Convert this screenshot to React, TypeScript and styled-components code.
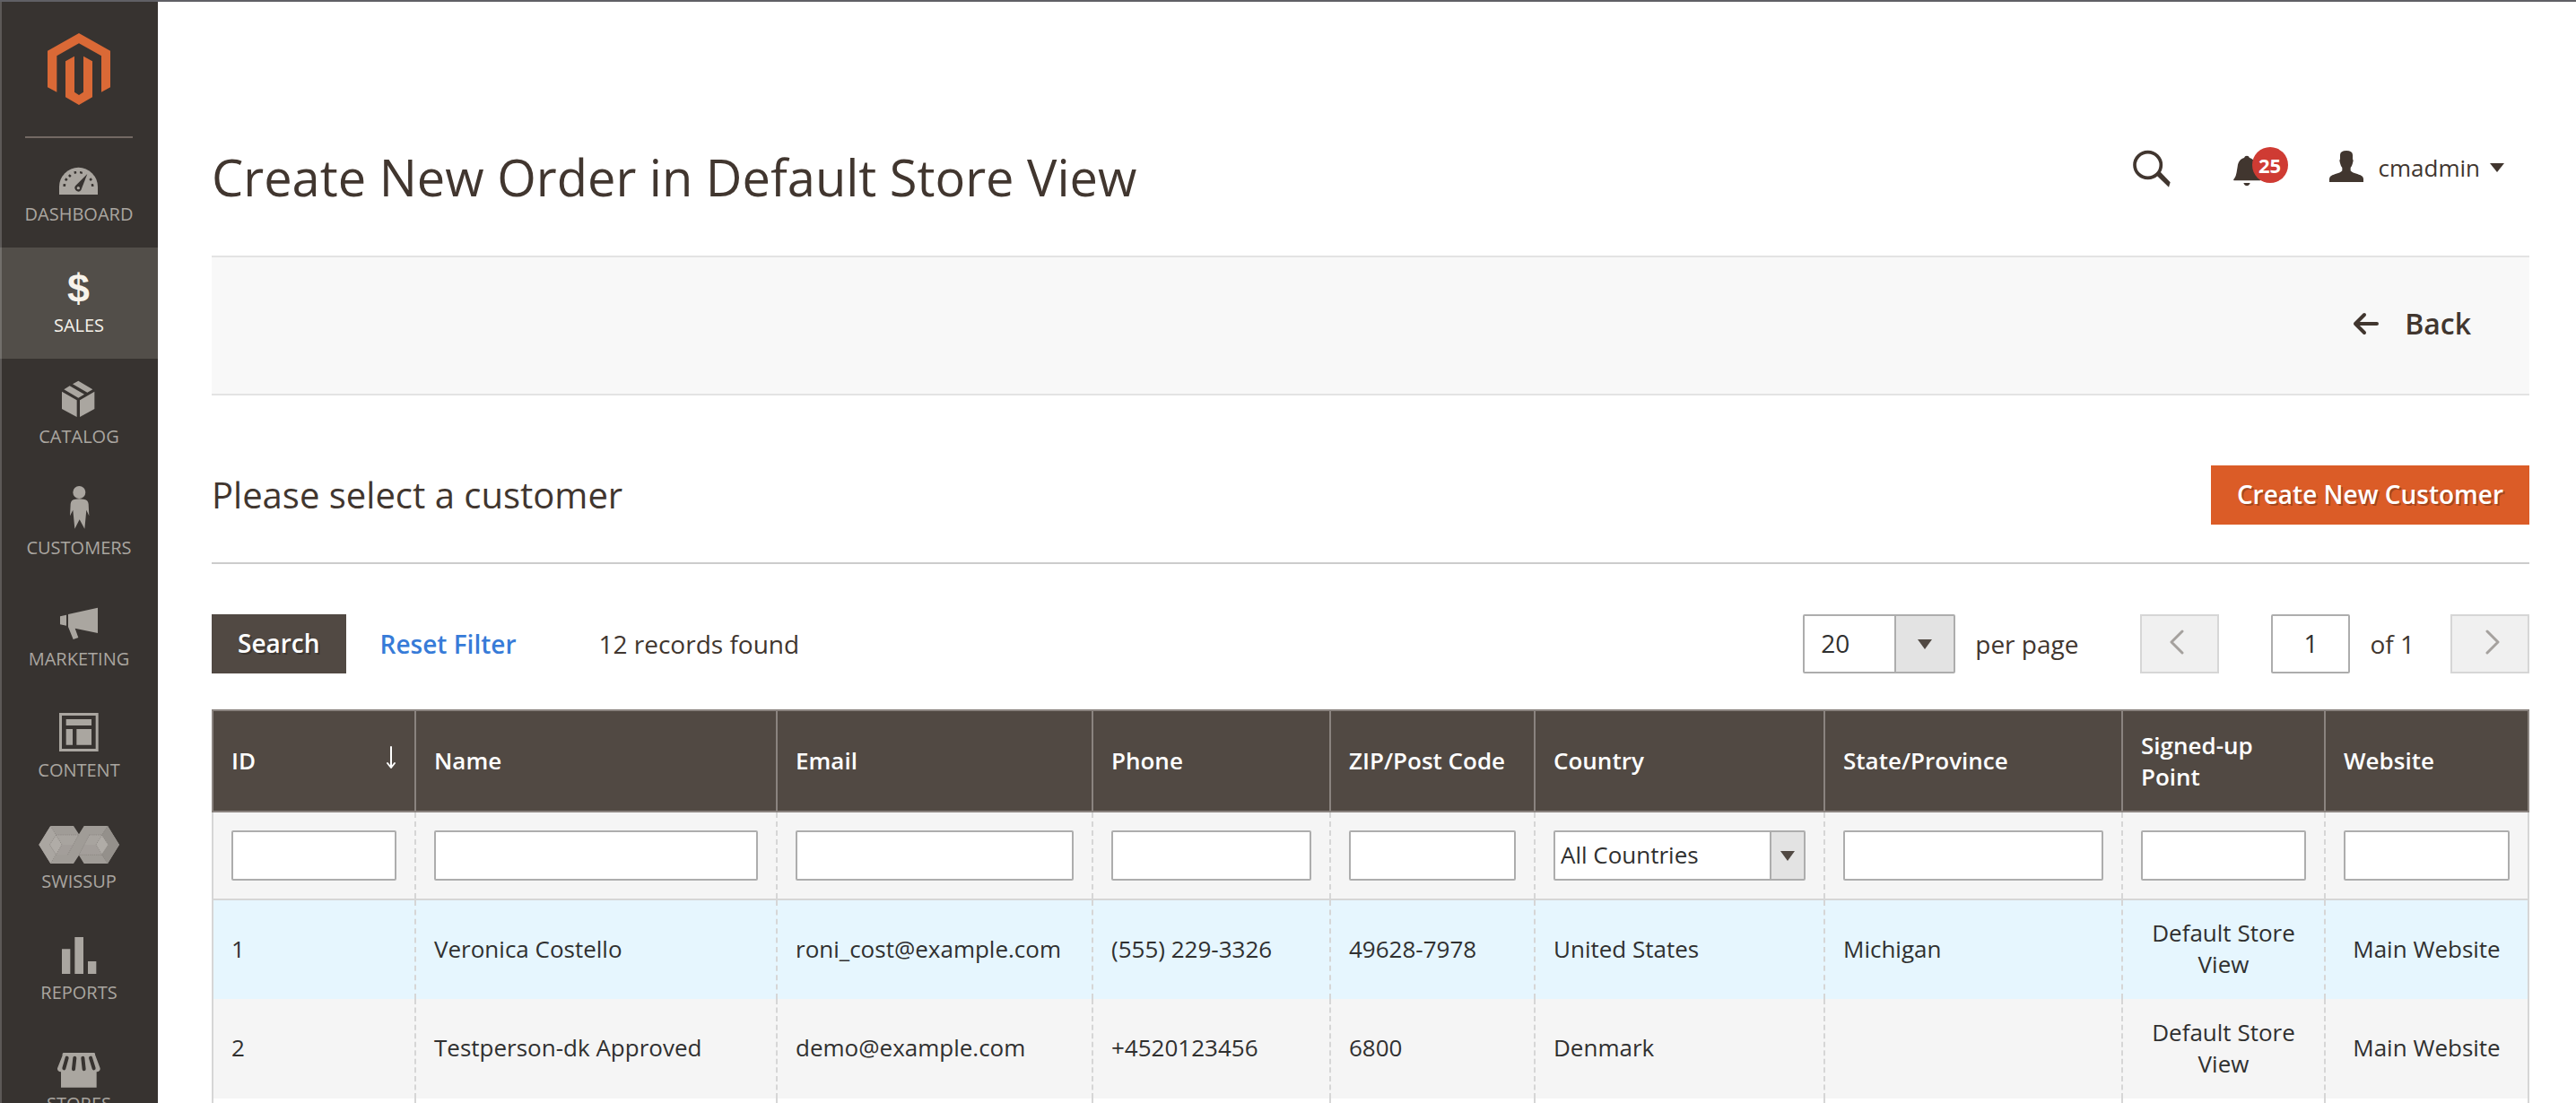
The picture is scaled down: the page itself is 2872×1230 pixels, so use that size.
import React from "react";
import styled, { createGlobalStyle, css } from "styled-components";

const GlobalStyle = createGlobalStyle`
  *, *::before, *::after { box-sizing: border-box; }
  html, body { margin: 0; padding: 0; background: #fff; }
  body {
    overflow: hidden;
    color: #41362f;
    font-family: "Open Sans", "Noto Sans", sans-serif;
    font-size: 28px;
    line-height: 38px;
  }
  button, input, select { font: inherit; color: inherit; margin: 0; }
  svg { display: block; flex: none; }
`;

const Page = styled.div`
  display: flex;
  height: 100vh;
  overflow: hidden;
  border-top: 2px solid #606065;
`;

/* ---------- Sidebar ---------- */

const edge = css`
  box-shadow: inset 2px 0 rgba(255, 255, 255, 0.19);
`;

const Sidebar = styled.nav`
  flex: none;
  width: 176px;
  background: #373330;
  ${edge}
`;

const LogoLink = styled.a`
  display: flex;
  height: 152px;
  margin: 0 28px -2px;
  padding-top: 35px;
  justify-content: center;
  border-bottom: 2px solid #736963;
`;

const Menu = styled.ul`
  list-style: none;
  margin: 0;
  padding: 0;
`;

const MenuLink = styled.a<{ $active?: boolean }>`
  display: flex;
  flex-direction: column;
  align-items: center;
  height: 124px;
  color: ${(p) => (p.$active ? "#f7f3eb" : "#aaa6a0")};
  font-size: 20px;
  line-height: 28px;
  text-transform: uppercase;
  text-decoration: none;
  ${(p) =>
    p.$active &&
    css`
      background: #524e49;
      ${edge}
    `}
`;

/* ---------- Header ---------- */

const Main = styled.main`
  flex: 1;
  min-width: 0;
  padding: 157px 52px 0 60px;
`;

const Header = styled.header`
  display: flex;
  justify-content: space-between;
  align-items: flex-start;
  margin-bottom: 50px;
`;

const Title = styled.h1`
  margin: 0;
  font-size: 56px;
  line-height: 76px;
  font-weight: 400;
`;

const Actions = styled.div`
  display: flex;
  height: 56px;
  padding-right: 28px;
`;

const PlainButton = styled.button`
  display: flex;
  align-items: center;
  padding: 0;
  border: 0;
  background: none;
  cursor: pointer;
`;

const SearchToggle = styled(PlainButton)`
  padding-right: 35px;
`;

const Bell = styled(PlainButton)`
  position: relative;
  width: 119px;
  padding-left: 35px;
`;

const Badge = styled.span`
  position: absolute;
  top: 5px;
  left: 56px;
  width: 40px;
  height: 40px;
  border-radius: 50%;
  background: #cf3b33;
  color: #fff;
  font-size: 22px;
  line-height: 40px;
  font-weight: 700;
  text-align: center;
`;

const Account = styled(PlainButton)`
  padding-left: 23px;
  font-size: 26px;
  line-height: 35px;
`;

const AccountName = styled.span`
  padding: 0 11px 0 17px;
`;

const Toolbar = styled.div`
  display: flex;
  justify-content: flex-end;
  align-items: center;
  height: 156px;
  padding: 0 65px 4px 0;
  background: #f8f8f8;
  border: solid #e3e3e3;
  border-width: 2px 0;
`;

const BackButton = styled(PlainButton)`
  gap: 28px;
  font-size: 32px;
  line-height: 44px;
  font-weight: 600;
`;

/* ---------- Section and grid controls ---------- */

const Section = styled.div`
  display: flex;
  justify-content: space-between;
  align-items: center;
  margin: 78px 0 56px;
  padding-bottom: 42px;
  border-bottom: 2px solid #ccc;
`;

const SectionTitle = styled.h2`
  margin: 0;
  font-size: 40px;
  line-height: 54px;
  font-weight: 400;
`;

const Button = styled.button<{ $primary?: boolean }>`
  height: 66px;
  padding: 0 29px 2px;
  border: 0;
  background: ${(p) => (p.$primary ? "#db5c27" : "#514943")};
  color: #fff;
  font-weight: 600;
  text-shadow: 2px 2px 0 rgba(0, 0, 0, 0.25);
  cursor: pointer;
`;

const Controls = styled.div`
  display: flex;
  justify-content: space-between;
  margin-bottom: 40px;
`;

const Group = styled.div`
  display: flex;
  align-items: center;
`;

const ResetButton = styled(PlainButton)`
  margin: 0 92px 0 38px;
  color: #377bd8;
  font-weight: 600;
`;

const field = css`
  width: 100%;
  border: 2px solid #adadad;
  border-radius: 2px;
  background: #fff;
  color: #303030;
  outline: 0;
`;

const SelectBox = styled.span<{ $large?: boolean }>`
  display: grid;
  align-items: center;
  width: ${(p) => (p.$large ? "170px" : "100%")};
  height: ${(p) => (p.$large ? "66px" : "56px")};

  > * {
    grid-area: 1 / 1;
  }

  select {
    ${field}
    height: 100%;
    padding: 0 0 2px ${(p) => (p.$large ? "18px" : "6px")};
    appearance: none;
  }
`;

const SelectArrow = styled.span<{ $large?: boolean }>`
  display: flex;
  align-items: center;
  justify-content: center;
  justify-self: end;
  width: ${(p) => (p.$large ? "66px" : "38px")};
  height: calc(100% - 4px);
  margin-right: 2px;
  border-left: 2px solid #adadad;
  background: #e3e3e3;
  pointer-events: none;
`;

const PerPage = styled.label`
  margin: 0 69px 0 22px;
`;

const PageButton = styled.button`
  display: flex;
  align-items: center;
  justify-content: center;
  width: 88px;
  height: 66px;
  padding: 0 0 4px;
  border: 2px solid #d6d6d6;
  background: #f0f0f0;
`;

const PageInput = styled.input`
  ${field}
  width: 88px;
  height: 66px;
  margin: 0 22px 0 58px;
  padding: 0 0 2px;
  text-align: center;
`;

const PageTotal = styled.label`
  margin-right: 40px;
`;

/* ---------- Table ---------- */

const Table = styled.table`
  width: 100%;
  table-layout: fixed;
  border-collapse: collapse;
  font-size: 26px;
  line-height: 35px;

  th {
    height: 113px;
    padding: 19px 20px;
    border: 2px solid #8a837f;
    background: #514943;
    color: #fff;
    font-weight: 600;
    text-align: left;
  }

  td {
    height: 111px;
    padding: 0 20px 2px;
    border: dashed #d6d6d6;
    border-width: 0 2px;
    color: #303030;
  }

  td:first-child {
    border-left-style: solid;
  }

  td:last-child {
    border-right-style: solid;
  }
`;

const Column = styled.col<{ $width: number }>`
  width: ${(p) => p.$width}px;
`;

const FilterRow = styled.tr`
  background: #f5f5f5;

  && td {
    height: 98px;
    padding: 20px;
    border-bottom: 2px solid #d6d6d6;
  }
`;

const FilterInput = styled.input`
  ${field}
  display: block;
  height: 56px;
  padding: 0 8px;
`;

const BodyRow = styled.tr<{ $tone: string }>`
  background: ${(p) => p.$tone};

  td:nth-child(n + 8) {
    text-align: center;
  }
`;

const SortButton = styled(PlainButton)`
  width: 100%;
  justify-content: space-between;
  font-weight: 600;
  text-align: left;
`;

/* ---------- Drawings ---------- */

function MenuIcon({ top, children }: { top: number; children: React.ReactNode }) {
  return (
    <svg width="90" height="73" viewBox={`129 ${top} 270 219`} fill="currentColor" aria-hidden="true">
      {children}
    </svg>
  );
}

const Triangle = () => (
  <svg width="16" height="11" viewBox="0 0 16 11" aria-hidden="true">
    <path d="M0 0h16L8 11z" fill="#514943" />
  </svg>
);

const Chevron = ({ d }: { d: string }) => (
  <svg width="22" height="28" viewBox="0 0 22 28" fill="none" stroke="#a5a19e" strokeWidth="3" strokeLinecap="round" strokeLinejoin="round" aria-hidden="true">
    <path d={d} />
  </svg>
);

const DashboardIcon = (
  <MenuIcon top={456}>
    <path d="M198 651v-26a64.500 64.500 0 0 1 129 0v26z" />
    <g fill="#373330">
      <path d="M212 615l8 1-1 8-8-1zM220 595l7 5-5 6-6-4zM233 583l6 5-5 6-6-6zM247 574l8-1 1 7-7 2zM267 573l9 2-1 7-8-2zM304 595l5 6-6 5-5-6zM305 616l7-1 2 8-8 1z" />
      <path d="M292 582l-21 54q-3 5-9 5-12-3-12-13 0-4 3-7z" />
    </g>
    <circle cx="262" cy="629" r="5" />
  </MenuIcon>
);

const SalesIcon = (
  <MenuIcon top={828}>
    <text x="262" y="1011" fontFamily="Liberation Sans, Arial, sans-serif" fontWeight="700" fontSize="134" textAnchor="middle">
      $
    </text>
  </MenuIcon>
);

const CatalogIcon = (
  <MenuIcon top={0}>
    <path d="M262 74l48 29-18 10-49-28zM233 91l49 28-20 12-48-28zM207 110l50 29v56l-50-27zM316 110l-49 29v56l49-27z" />
  </MenuIcon>
);

const CustomersIcon = (
  <MenuIcon top={372}>
    <circle cx="265" cy="447" r="21" />
    <path d="M234 526l2-40q1-15 16-16 13-2 27 0 16 1 17 16l2 40-9-20-6 63-17-31-16 31-6-63z" />
  </MenuIcon>
);

const MarketingIcon = (
  <MenuIcon top={744}>
    <path d="M201 862l21-5v36l-21-4zM228 855l99-22v85l-76-16 11 31-17 6-17-42z" />
  </MenuIcon>
);

const ContentIcon = (
  <MenuIcon top={1116}>
    <path fillRule="evenodd" d="M198 1185h131v129H198zM207 1194v111h113v-111z" />
    <path d="M221 1206h85v21h-85zM221 1239h22v53h-22zM256 1239h50v53h-50z" />
  </MenuIcon>
);

const SwissupIcon = (
  <MenuIcon top={258}>
    <path fill="#a09c97" d="M130 396l39-63h77l18 28 17-28h79l39 63-39 63h-79l-17-28-18 28h-77z" />
    <path fill="#aaa6a1" d="M130 396l39-63 19 30-22 33 22 34-19 29z" />
    <path fill="#94908b" d="M399 396l-39-63-20 30 22 33-22 34 20 29z" />
    <path fill="#a8a49f" d="M188 363h75l-37 67h-38l19-34zM299 363h41l-19 33 19 34h-76z" />
    <path fill="#b0aca7" d="M166 396l22-33 19 33-19 34zM321 396l19-33 22 33-22 34z" />
    <path fill="#9a9691" d="M207 396h38l-19 34h-38zM281 396h40l19 34h-76z" opacity=".35" />
    <g fill="none" stroke="#85817c" strokeWidth="2" strokeDasharray="4 3">
      <path d="M169 333l38 63-38 63M188 363l-22 33 22 34M360 333l-39 63 39 63M340 363l22 33-22 34M188 363h75l-37 67M299 363h41M299 363l-35 67h76" />
    </g>
  </MenuIcon>
);

const ReportsIcon = (
  <MenuIcon top={630}>
    <path d="M207 745h28v83h-28zM250 705h29v123h-29zM294 786h28v42h-28z" />
  </MenuIcon>
);

const StoresIcon = (
  <MenuIcon top={1002}>
    <path d="M211 1092h105l3 9 16 43q1 11-12 12v52H204v-52q-13-1-12-12l17-43z" />
    <g stroke="#373330" strokeWidth="12" strokeLinecap="round">
      <path d="M224 1109l-10 35M250 1109l-4 38M277 1109l4 38M303 1109l11 35" />
    </g>
    <path d="M209 1094h109v8H209z" />
  </MenuIcon>
);

const menu = [
  { label: "Dashboard", icon: DashboardIcon },
  { label: "Sales", icon: SalesIcon, active: true },
  { label: "Catalog", icon: CatalogIcon },
  { label: "Customers", icon: CustomersIcon },
  { label: "Marketing", icon: MarketingIcon },
  { label: "Content", icon: ContentIcon },
  { label: "Swissup", icon: SwissupIcon },
  { label: "Reports", icon: ReportsIcon },
  { label: "Stores", icon: StoresIcon },
];

const columns = [
  { label: "ID", width: 226 },
  { label: "Name", width: 403 },
  { label: "Email", width: 352 },
  { label: "Phone", width: 265 },
  { label: "ZIP/Post Code", width: 228 },
  { label: "Country", width: 323 },
  { label: "State/Province", width: 332 },
  { label: "Signed-up Point", width: 226 },
  { label: "Website", width: 227 },
];

const customers = [
  {
    tone: "#e6f6fe",
    cells: ["1", "Veronica Costello", "roni_cost@example.com", "(555) 229-3326", "49628-7978", "United States", "Michigan", "Default Store View", "Main Website"],
  },
  {
    tone: "#f5f5f5",
    cells: ["2", "Testperson-dk Approved", "demo@example.com", "+4520123456", "6800", "Denmark", "", "Default Store View", "Main Website"],
  },
  { tone: "#ffffff", cells: ["", "", "", "", "", "", "", "", ""] },
];

export default function App() {
  return (
    <>
      <GlobalStyle />
      <Page>
        <Sidebar aria-label="Admin menu">
          <LogoLink href="#" aria-label="Magento Admin Panel">
            <svg width="70" height="80" viewBox="159 111 210 240" fill="#da6936" aria-hidden="true">
              <path d="M264 111l105 59v122l-30 16V187l-75-42-74 42v121l-31-16V170z" />
              <path d="M219 205l30-17v120l15 10 15-10V188l30 17v120l-45 26-45-26z" />
            </svg>
          </LogoLink>
          <Menu>
            {menu.map((item) => (
              <li key={item.label}>
                <MenuLink href="#" $active={item.active}>
                  {item.icon}
                  {item.label}
                </MenuLink>
              </li>
            ))}
          </Menu>
        </Sidebar>

        <Main>
          <Header>
            <Title>Create New Order in Default Store View</Title>
            <Actions>
              <SearchToggle type="button" aria-label="Search">
                <svg width="42" height="56" viewBox="27 12 126 168" fill="#41362f" aria-hidden="true">
                  <ellipse cx="77" cy="87" rx="44" ry="43" fill="none" stroke="#41362f" strokeWidth="11" />
                  <path d="M105 121l14-11 33 35-5 16z" />
                </svg>
              </SearchToggle>
              <Bell type="button" aria-label="Notifications">
                <svg width="30" height="56" viewBox="360 12 90 168" fill="#41362f" aria-hidden="true">
                  <path d="M360 136C370 126 371 110 374 92c2-16 10-26 22-29q2-7 9-7t9 7c12 3 20 13 22 29 3 18 4 34 14 44v3H362z" />
                  <path d="M394 147h22q-4 10-11 10t-11-10z" />
                </svg>
                <Badge>25</Badge>
              </Bell>
              <Account type="button">
                <svg width="38" height="56" viewBox="681 12 114 168" fill="#41362f" aria-hidden="true">
                  <path d="M738 39q20 0 21 14v14q4 4 0 14-2 9-7 15v10c4 7 20 10 33 15q10 5 10 12v11H681v-11q0-7 10-12c13-5 29-8 33-15V96q-5-6-7-15-4-10 0-14V53q1-14 21-14z" />
                </svg>
                <AccountName>cmadmin</AccountName>
                <svg width="16" height="10" viewBox="0 0 16 10" fill="#41362f" aria-hidden="true">
                  <path d="M0 0h16L8 10z" />
                </svg>
              </Account>
            </Actions>
          </Header>

          <Toolbar>
            <BackButton type="button">
              <svg width="30" height="26" viewBox="0 0 30 26" fill="none" stroke="#41362f" strokeWidth="4" strokeLinecap="round" strokeLinejoin="round" aria-hidden="true">
                <path d="M13 3L3 13l10 10M3 13h24" />
              </svg>
              Back
            </BackButton>
          </Toolbar>

          <Section>
            <SectionTitle>Please select a customer</SectionTitle>
            <Button type="button" $primary>
              Create New Customer
            </Button>
          </Section>

          <Controls>
            <Group>
              <Button type="button">Search</Button>
              <ResetButton type="button">Reset Filter</ResetButton>
              <span>12 records found</span>
            </Group>
            <Group>
              <SelectBox $large>
                <select id="per-page" defaultValue="20">
                  <option>20</option>
                  <option>30</option>
                  <option>50</option>
                </select>
                <SelectArrow $large>
                  <Triangle />
                </SelectArrow>
              </SelectBox>
              <PerPage htmlFor="per-page">per page</PerPage>
              <PageButton type="button" disabled aria-label="Previous page">
                <Chevron d="M14 2L2 14l12 12" />
              </PageButton>
              <PageInput id="page" defaultValue="1" />
              <PageTotal htmlFor="page">of 1</PageTotal>
              <PageButton type="button" disabled aria-label="Next page">
                <Chevron d="M8 2l12 12L8 26" />
              </PageButton>
            </Group>
          </Controls>

          <Table>
            <colgroup>
              {columns.map((column) => (
                <Column key={column.label} $width={column.width} />
              ))}
            </colgroup>
            <thead>
              <tr>
                {columns.map((column) => (
                  <th key={column.label} scope="col">
                    {column.label === "ID" ? (
                      <SortButton type="button">
                        ID
                        <svg width="12" height="34" viewBox="0 0 12 34" fill="none" stroke="#fff" strokeWidth="2" strokeLinecap="round" strokeLinejoin="round" aria-hidden="true">
                          <path d="M6 1v22M2 19l4 5 4-5" />
                        </svg>
                      </SortButton>
                    ) : (
                      column.label
                    )}
                  </th>
                ))}
              </tr>
            </thead>
            <tbody>
              <FilterRow>
                {columns.map((column) => (
                  <td key={column.label}>
                    {column.label === "Country" ? (
                      <SelectBox>
                        <select aria-label="Country" defaultValue="All Countries">
                          <option>All Countries</option>
                        </select>
                        <SelectArrow>
                          <Triangle />
                        </SelectArrow>
                      </SelectBox>
                    ) : (
                      <FilterInput aria-label={column.label} />
                    )}
                  </td>
                ))}
              </FilterRow>
              {customers.map((customer, row) => (
                <BodyRow key={row} $tone={customer.tone}>
                  {customer.cells.map((cell, index) => (
                    <td key={index}>{cell}</td>
                  ))}
                </BodyRow>
              ))}
            </tbody>
          </Table>
        </Main>
      </Page>
    </>
  );
}
